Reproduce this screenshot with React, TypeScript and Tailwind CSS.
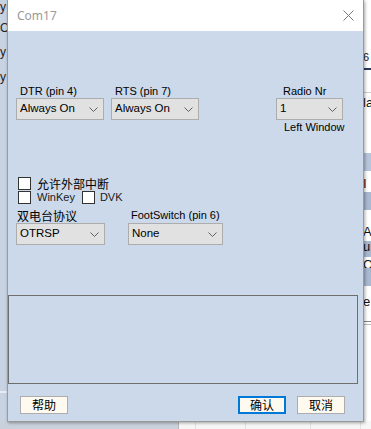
import React from "react";

const latin = { fontFamily: '"Liberation Sans", Arial, sans-serif' };
const cjk = { fontFamily: '"Noto Sans CJK SC", "Liberation Sans", sans-serif' };

function Chevron() {
  return (
    <svg width="9" height="5" viewBox="0 0 9 5" className="shrink-0">
      <path d="M0.5 0.5 L4.5 4.5 L8.5 0.5" fill="none" stroke="#606060" strokeWidth="1" />
    </svg>
  );
}

function Select({ value, w }: { value: string; w: string }) {
  return (
    <div
      className={`h-[22px] ${w} flex items-center justify-between bg-[#e1e1e1] border border-[#adadad] pl-[3px] pr-[5px] text-[11.5px] text-black`}
      style={latin}
    >
      <span>{value}</span>
      <Chevron />
    </div>
  );
}

function Check() {
  return <div className="w-[13px] h-[13px] bg-white border border-[#333] shrink-0" />;
}

function Btn({ label, primary }: { label: string; primary?: boolean }) {
  return (
    <div
      className={`w-[48px] h-[18px] flex items-center justify-center bg-[#fffaf0] text-[12px] leading-none text-black ${
        primary ? "border-2 border-[#0078d7]" : "border border-[#adadad]"
      }`}
      style={cjk}
    >
      {label}
    </div>
  );
}

export default function App() {
  return (
    <div className="relative w-[371px] h-[429px] overflow-hidden bg-white" style={latin}>
      {/* background window at left */}
      <div className="absolute left-0 top-0 w-[8px] h-[421px] bg-[#c7d2e2] text-[12px] text-[#222]">
        <div className="absolute left-0 top-[0px] leading-[14px]">y</div>
        <div className="absolute left-0 top-[21px] leading-[14px]">Or</div>
        <div className="absolute left-0 top-[45px] leading-[14px]">y</div>
        <div className="absolute left-0 top-[70px] leading-[14px]">y</div>
        <div className="absolute left-0 top-[391px] w-[8px] h-[2px] bg-[#e8ecf2]" />
      </div>
      {/* background bottom */}
      <div className="absolute left-0 top-[421px] w-[178px] h-[8px] bg-[#c9d1dd]" />
      <div className="absolute left-[178px] top-[421px] w-[193px] h-[8px] bg-[#f7f7f7]">
        <div className="absolute left-0 top-0 w-[1px] h-[8px] bg-[#b8b8b8]" />
        <div className="absolute left-[17px] top-0 w-[1px] h-[8px] bg-[#e2e2e2]" />
        <div className="absolute left-[67px] top-0 w-[1px] h-[8px] bg-[#e2e2e2]" />
        <div className="absolute left-[132px] top-0 w-[1px] h-[8px] bg-[#e2e2e2]" />
        <div className="absolute left-[182px] top-0 w-[1px] h-[8px] bg-[#e2e2e2]" />
      </div>
      {/* background right window */}
      <div className="absolute left-[363px] top-0 w-[8px] h-[421px] bg-white text-[13px] text-[#111]">
        <div className="absolute left-0 top-[50px] leading-[14px] text-[11px]">6</div>
        <div className="absolute left-0 top-[68px] w-[8px] h-[2px] bg-[#2a3a5a]" />
        <div className="absolute left-0 top-[92px] w-[8px] h-[1px] bg-[#d0d0d0]" />
        <div className="absolute left-0 top-[96px] leading-[14px]">la</div>
        <div className="absolute left-0 top-[153px] w-[8px] h-[18px] bg-[#b7c5dc]" />
        <div className="absolute left-0 top-[177px] leading-[14px]">I</div>
        <div className="absolute left-0 top-[192px] w-[8px] h-[18px] bg-[#a9b9d2]" />
        <div className="absolute left-0 top-[225px] leading-[14px]">A</div>
        <div className="absolute left-0 top-[241px] w-[8px] h-[16px] bg-[#a9b9d2]" />
        <div className="absolute left-0 top-[240px] leading-[14px]">u</div>
        <div className="absolute left-0 top-[258px] leading-[14px]">O</div>
        <div className="absolute left-0 top-[268px] w-[8px] h-[18px] bg-[#a9b9d2]" />
        <div className="absolute left-0 top-[295px] leading-[14px]">e</div>
        <div className="absolute left-0 top-[321px] w-[8px] h-[1px] bg-[#888]" />
        <div className="absolute left-0 top-[324px] w-[8px] h-[1px] bg-[#bbb]" />
      </div>

      {/* dialog */}
      <div className="absolute left-[7px] top-0 w-[357px] h-[422px] flex flex-col bg-[#ccd9ea] border border-[#9a9a9a] border-t-0 shadow-[1px_1px_3px_rgba(0,0,0,0.35)]">
        {/* title bar */}
        <div className="h-[31px] bg-white flex items-center justify-between pl-[9px] pr-[9px] shrink-0">
          <span className="text-[12px] text-[#999]" style={{ fontFamily: '"Noto Sans", sans-serif' }}>
            Com17
          </span>
          <svg width="11" height="11" viewBox="0 0 11 11">
            <path d="M0.5 0.5 L10.5 10.5 M10.5 0.5 L0.5 10.5" stroke="#777" strokeWidth="1" />
          </svg>
        </div>
        {/* body */}
        <div className="flex flex-col flex-1">
          {/* row 1 */}
          <div className="flex pt-[53px] pl-[8px]">
            <div className="flex flex-col w-[88px]">
              <div className="h-[14px] pl-[4px] text-[11px] leading-[14px] text-black">DTR (pin 4)</div>
              <Select value="Always On" w="w-[88px]" />
            </div>
            <div className="flex flex-col w-[88px] ml-[7px]">
              <div className="h-[14px] pl-[4px] text-[11px] leading-[14px] text-black">RTS (pin 7)</div>
              <Select value="Always On" w="w-[88px]" />
            </div>
            <div className="flex flex-col w-[67px] ml-[77px]">
              <div className="h-[14px] pl-[7px] text-[11px] leading-[14px] text-black">Radio Nr</div>
              <Select value="1" w="w-[67px]" />
              <div className="pl-[8px] pt-[1px] text-[11px] leading-[12px] text-black whitespace-nowrap">Left Window</div>
            </div>
          </div>
          {/* checkboxes */}
          <div className="flex items-center pl-[10px] mt-[44px] h-[13px]">
            <Check />
            <span className="ml-[6px] text-[12px] leading-none text-black" style={cjk}>
              允许外部中断
            </span>
          </div>
          <div className="flex items-center pl-[10px] mt-[1px] h-[13px]">
            <Check />
            <span className="ml-[6px] text-[11px] leading-none text-[#1a1a1a]">WinKey</span>
            <div className="ml-[7px]">
              <Check />
            </div>
            <span className="ml-[5px] text-[11px] leading-none text-[#1a1a1a]">DVK</span>
          </div>
          {/* row 3 */}
          <div className="flex pl-[8px] mt-[4px]">
            <div className="flex flex-col w-[89px]">
              <div className="h-[15px] pl-[1px] text-[12px] leading-[15px] text-black" style={cjk}>
                双电台协议
              </div>
              <Select value="OTRSP" w="w-[89px]" />
            </div>
            <div className="flex flex-col ml-[23px]">
              <div className="h-[15px] pl-[3px] text-[11px] leading-[15px] text-black">FootSwitch (pin 6)</div>
              <Select value="None" w="w-[95px]" />
            </div>
          </div>
          {/* frame */}
          <div className="mt-[50px] h-[89px] w-[350px] border border-[#6e6e6e]" />
          {/* buttons */}
          <div className="flex pl-[12px] mt-[12px]">
            <Btn label="帮助" />
            <div className="ml-[170px]">
              <Btn label="确认" primary />
            </div>
            <div className="ml-[11px]">
              <Btn label="取消" />
            </div>
          </div>
        </div>
      </div>
    </div>
  );
}
